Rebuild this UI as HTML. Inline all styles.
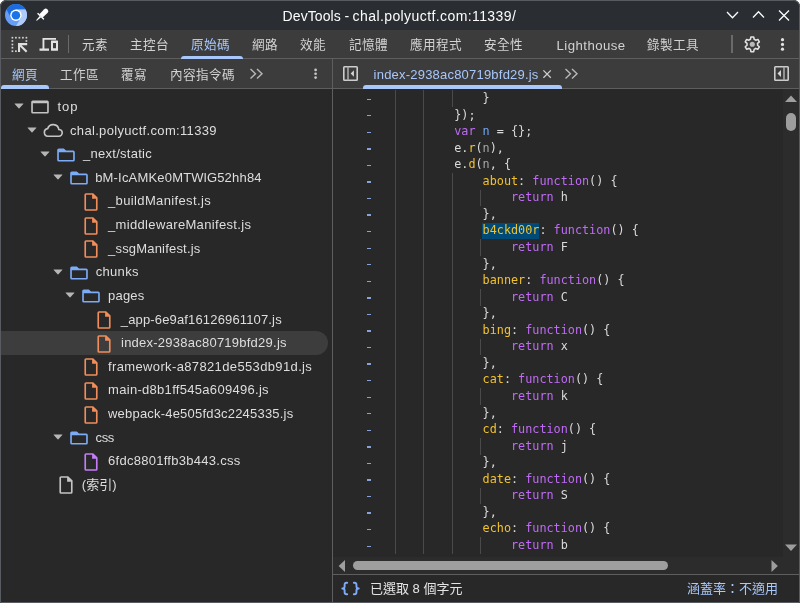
<!DOCTYPE html>
<html lang="zh-Hant">
<head>
<meta charset="utf-8">
<title>DevTools - chal.polyuctf.com:11339/</title>
<style>
*{box-sizing:border-box;margin:0;padding:0}
html,body{width:800px;height:603px;overflow:hidden;background:#fff}
body{font-family:"Liberation Sans","Noto Sans CJK TC",sans-serif;color:#e3e3e3;font-size:13px;position:relative}
.win{will-change:transform;position:absolute;left:0;top:0;width:800px;height:603px;background:#282828;border-radius:6.5px 6.5px 0 0;overflow:hidden}
.frame{position:absolute;left:0;top:0;width:800px;height:603px;border:1px solid #585c60;border-radius:6.5px 6.5px 0 0;z-index:50;pointer-events:none}
.abs{position:absolute}
.titlebar{position:absolute;left:0;top:0;width:800px;height:30px;background:#2a2e32}
.title{position:absolute;left:282.6px;width:400px;top:6.5px;height:18px;line-height:18px;text-align:left;font-size:14px;letter-spacing:0.32px;color:#fcfcfc;white-space:pre}
.toolbar{position:absolute;left:0;top:30px;width:800px;height:28px;background:#3c3c3c}
.hline{position:absolute;height:1px;background:#5e5e5e}
.vline{position:absolute;width:1px;background:#5e5e5e}
.tab{position:absolute;top:0;height:28px;line-height:31px;font-size:12.6px;letter-spacing:0.4px;color:#d2d2d2;white-space:nowrap}
.tab.sel{color:#a8c7fa}
.uline{position:absolute;z-index:5;height:3.5px;background:#a8c7fa;border-radius:3px 3px 0 0}
.row2{position:absolute;left:0;top:59px;width:800px;height:29px;background:#3c3c3c}
.tree{position:absolute;left:1px;top:89px;width:331px;height:513px;background:#282828}
.trow{position:absolute;left:0;width:331px;height:23.6px;line-height:23.6px;font-size:13px;white-space:pre;color:#dedede}
.trow span.t{position:absolute;top:1.3px}
.trow svg{position:absolute}
.code{position:absolute;left:333px;top:89px;width:450px;height:468px;background:#282828;overflow:hidden}
.ln{position:absolute;height:16.556px;line-height:16.556px;font-family:"DejaVu Sans Mono","Liberation Mono",monospace;font-size:11.8px;letter-spacing:-0.004px;white-space:pre;color:#dadada}
.k{color:#c06bf6}.p{color:#f2c22c}.v{color:#74a5f2}.n{color:#a6a6a6}
.dash{position:absolute;left:33.7px;width:4.6px;height:1.4px;background:#86a4d8}
.guide{position:absolute;width:1px;background:#4a4a4a}
.status{position:absolute;left:333px;top:575px;width:466px;height:27px;background:#282828;font-size:13px}
</style>
</head>
<body>
<div class="win">
  <!-- title bar -->
  <div class="titlebar">
    <svg class="abs" style="left:4px;top:3px" width="24" height="24" viewBox="0 0 24 24">
      <circle cx="12" cy="12" r="11" fill="#669df6"/>
      <path d="M2.47 6.5 A11 11 0 0 1 21.53 6.5 L12 6.6 L7.1 15 Z" fill="#1b6ce0"/>
      <path d="M21.53 6.5 A11 11 0 0 1 12 23 L16.76 14.9 L12 6.5Z" fill="#aecbfa"/>
      <circle cx="11.9" cy="12.25" r="5.7" fill="#fff"/>
      <circle cx="11.9" cy="12.25" r="4.3" fill="#1a73e8"/>
    </svg>
    <svg class="abs" style="left:35px;top:8.2px;overflow:visible" width="14" height="14" viewBox="0 0 14 14">
      <g transform="rotate(45 7 7)" fill="#fcfcfc">
        <path d="M4.7 8.4 L4.5 1.4 Q4.5 -0.8 7 -0.8 Q9.5 -0.8 9.5 1.4 L9.3 8.4 Z"/>
        <rect x="2.5" y="8.1" width="9" height="1.4" rx="0.5"/>
        <path d="M6.0 9.3 H8.0 L7.5 14.8 H6.5 Z"/>
      </g>
    </svg>
    <div class="title"><span style="letter-spacing:0.07px">DevTools</span><span style="letter-spacing:-0.2px"> - </span><span style="letter-spacing:0.41px">chal.polyuctf.com:11339/</span></div>
    <svg class="abs" style="left:724px;top:7px" width="70" height="16" viewBox="0 0 70 16" fill="none" stroke="#fcfcfc" stroke-width="1.3">
      <path d="M3 5 L8.5 10.7 L14 5"/>
      <path d="M29 10.5 L34.5 4.8 L40 10.5"/>
      <path d="M55 3.5 L65 13.5 M65 3.5 L55 13.5"/>
    </svg>
  </div>

  <!-- main toolbar -->
  <div class="toolbar">
    <svg class="abs" style="left:9.5px;top:6px" width="19" height="18" viewBox="0 0 19 18" fill="#dedede">
      <g opacity="0.92"><rect x="1.55" y="0.85" width="1.7" height="1.7"/><rect x="5.05" y="0.85" width="1.7" height="1.7"/><rect x="8.55" y="0.85" width="1.7" height="1.7"/><rect x="12.05" y="0.85" width="1.7" height="1.7"/><rect x="15.55" y="0.85" width="1.7" height="1.7"/><rect x="1.55" y="4.15" width="1.7" height="1.7"/><rect x="1.55" y="7.65" width="1.7" height="1.7"/><rect x="1.55" y="10.85" width="1.7" height="1.7"/><rect x="1.55" y="14.35" width="1.7" height="1.7"/><rect x="15.55" y="4.15" width="1.7" height="1.7"/><rect x="5.05" y="14.35" width="1.7" height="1.7"/></g>
      <path d="M8 7 H17.2 V9.2 H11.6 L17.4 15 L15.9 16.5 L10.1 10.7 V16 H8 Z"/>
    </svg>
    <svg class="abs" style="left:39px;top:6px" width="20" height="18" viewBox="0 0 20 18" fill="#e3e3e3">
      <path d="M3.5 2 H17 V3.8 H5.4 V12.5 H10 V14.8 H0.5 V12.5 H3.5 Z"/>
      <path d="M12.6 4.5 H18.4 Q19 4.5 19 5.1 V14.2 Q19 14.8 18.4 14.8 H12.6 Q12 14.8 12 14.2 V5.1 Q12 4.5 12.6 4.5 Z M14 7 V12.2 H17 V7 Z" fill-rule="evenodd"/>
    </svg>
    <div class="vline" style="left:68px;top:5px;height:18px;background:#6a6a6a"></div>
    <div class="tab" style="left:82px">元素</div>
    <div class="tab" style="left:130px">主控台</div>
    <div class="tab sel" style="left:191px">原始碼</div>
    <div class="tab" style="left:252px">網路</div>
    <div class="tab" style="left:300px">效能</div>
    <div class="tab" style="left:349px">記憶體</div>
    <div class="tab" style="left:410px">應用程式</div>
    <div class="tab" style="left:484px">安全性</div>
    <div class="tab" style="left:556.6px;font-size:13.2px;letter-spacing:0.44px">Lighthouse</div>
    <div class="tab" style="left:647px">錄製工具</div>
    <div class="uline" style="left:180.5px;top:25.5px;width:62px"></div>
    <div class="vline" style="left:731.4px;top:5px;height:18px;width:1.3px;background:#6a6a6a"></div>
    <svg class="abs" style="left:743.2px;top:5.2px" width="18.6" height="18.6" viewBox="0 0 24 24" fill="none" stroke="#e3e3e3" stroke-width="2">
      <path d="M10.2 2.5h3.6l.6 3 2 1.2 2.9-1 1.8 3.1-2.3 2v2.4l2.3 2-1.8 3.1-2.9-1-2 1.2-.6 3h-3.6l-.6-3-2-1.2-2.9 1-1.8-3.1 2.3-2v-2.4l-2.3-2 1.8-3.1 2.9 1 2-1.2z" stroke-linejoin="round"/>
      <circle cx="12" cy="12" r="3.3" fill="#b9b9b9" stroke="none"/>
    </svg>
    <svg class="abs" style="left:779px;top:7px" width="8" height="16" viewBox="0 0 8 16" fill="#e3e3e3">
      <circle cx="3.5" cy="2.7" r="1.6"/><circle cx="3.5" cy="7.45" r="1.6"/><circle cx="3.5" cy="12.2" r="1.6"/>
    </svg>
  </div>
  <div class="hline" style="left:0;top:58px;width:800px"></div>

  <!-- second row -->
  <div class="row2">
    <div class="tab sel" style="left:12px;line-height:32px">網頁</div>
    <div class="tab" style="left:60px;line-height:32px">工作區</div>
    <div class="tab" style="left:121px;line-height:32px">覆寫</div>
    <div class="tab" style="left:170px;line-height:32px">內容指令碼</div>
    <svg class="abs" style="left:249px;top:9px" width="15" height="12" viewBox="0 0 15 12" fill="none" stroke="#b8b8b8" stroke-width="1.4">
      <path d="M1.5 1 L6.5 5.8 L1.5 10.6"/><path d="M8 1 L13 5.8 L8 10.6"/>
    </svg>
    <svg class="abs" style="left:312.3px;top:7px" width="8" height="16" viewBox="0 0 8 16" fill="#c8c8c8">
      <circle cx="3.6" cy="3.9" r="1.35"/><circle cx="3.6" cy="7.75" r="1.35"/><circle cx="3.6" cy="11.6" r="1.35"/>
    </svg>
    <div class="uline" style="left:1px;top:26px;width:48px;height:3.7px"></div>
    <div class="vline" style="left:332px;top:0;height:29px"></div>
    <svg class="abs" style="left:342px;top:6px" width="17" height="17" viewBox="0 0 17 17" fill="none" stroke="#cdcdcd" stroke-width="1.6">
      <rect x="1.8" y="1.8" width="13.4" height="13.4" rx="0.7"/>
      <path d="M6 1.8 V15.2" stroke="#a8a8a8"/>
      <path d="M11.9 5.2 L8.7 8.5 L11.9 11.8Z" fill="#d6d6d6" stroke="none"/>
    </svg>
    <div class="tab sel" style="left:373.6px;line-height:32px;font-size:13px;letter-spacing:0.21px">index-2938ac80719bfd29.js</div>
    <svg class="abs" style="left:542px;top:10px" width="10" height="10" viewBox="0 0 10 10" fill="none" stroke="#d0d0d0" stroke-width="1.25">
      <path d="M1.4 1.4 L8.8 8.8 M8.8 1.4 L1.4 8.8"/>
    </svg>
    <div class="uline" style="left:362.5px;top:26px;width:199px;height:3.7px"></div>
    <svg class="abs" style="left:564px;top:9px" width="15" height="12" viewBox="0 0 15 12" fill="none" stroke="#b8b8b8" stroke-width="1.4">
      <path d="M1.5 1 L6.5 5.8 L1.5 10.6"/><path d="M8 1 L13 5.8 L8 10.6"/>
    </svg>
    <svg class="abs" style="left:773px;top:6px" width="17" height="17" viewBox="0 0 17 17" fill="none" stroke="#cdcdcd" stroke-width="1.6">
      <rect x="1.8" y="1.8" width="13.4" height="13.4" rx="0.7"/>
      <path d="M11 1.8 V15.2" stroke="#a8a8a8"/>
      <path d="M8 5 L4.5 8.5 L8 12Z" fill="#d6d6d6" stroke="none"/>
    </svg>
  </div>
  <div class="hline" style="left:0;top:88px;width:800px"></div>

  <!-- TREE -->
  <div class="tree">
    <div class="trow" style="top:5.750px"><span class="abs" style="left:13.20px;top:8.6px;line-height:0"><svg width="10" height="6" viewBox="0 0 10 6"><path d="M0.9 0.4 H9.1 Q9.7 0.4 9.3 0.9 L5.4 5.3 Q5 5.7 4.6 5.3 L0.7 0.9 Q0.3 0.4 0.9 0.4 Z" fill="#b6b6b6"/></svg></span><span class="abs" style="left:28.20px;top:1.70px;line-height:0"><svg width="22" height="22" viewBox="0 0 20 20" fill="#c4c4c4"><path fill-rule="evenodd" d="M3.4 4 H16.6 Q18 4 18 5.4 V14.6 Q18 16 16.6 16 H3.4 Q2 16 2 14.6 V5.4 Q2 4 3.4 4 Z M3.5 6.7 V14.5 H16.5 V6.7 Z"/></svg></span><span class="t" style="left:56.56px;top:0.35px;letter-spacing:0.870px">top</span></div>
    <div class="trow" style="top:29.375px"><span class="abs" style="left:26.00px;top:8.6px;line-height:0"><svg width="10" height="6" viewBox="0 0 10 6"><path d="M0.9 0.4 H9.1 Q9.7 0.4 9.3 0.9 L5.4 5.3 Q5 5.7 4.6 5.3 L0.7 0.9 Q0.3 0.4 0.9 0.4 Z" fill="#b6b6b6"/></svg></span><span class="abs" style="left:41.00px;top:1.70px;line-height:0"><svg width="22" height="22" viewBox="0 0 20 20" fill="none" stroke="#c4c4c4" stroke-width="1.5"><path d="M5.3 14.75 A3.5 3.5 0 0 1 5.2 7.8 A5.2 5.2 0 0 1 15.3 8.6 A3.07 3.07 0 0 1 15.3 14.75 Z"/></svg></span><span class="t" style="left:69.00px;top:0.72px;letter-spacing:0.330px">chal.polyuctf.com:11339</span></div>
    <div class="trow" style="top:53.000px"><span class="abs" style="left:38.80px;top:8.6px;line-height:0"><svg width="10" height="6" viewBox="0 0 10 6"><path d="M0.9 0.4 H9.1 Q9.7 0.4 9.3 0.9 L5.4 5.3 Q5 5.7 4.6 5.3 L0.7 0.9 Q0.3 0.4 0.9 0.4 Z" fill="#b6b6b6"/></svg></span><span class="abs" style="left:53.80px;top:1.70px;line-height:0"><svg width="22" height="22" viewBox="0 0 20 20" fill="#7cacf8"><path fill-rule="evenodd" d="M3.5 16 Q2 16 2 14.5 V5.5 Q2 4 3.5 4 H8 L10 6 H16.5 Q18 6 18 7.5 V14.5 Q18 16 16.5 16 Z M3.5 7.4 V14.5 H16.5 V7.4 Z"/></svg></span><span class="t" style="left:82.06px;top:0.10px;letter-spacing:0.266px">_next/static</span></div>
    <div class="trow" style="top:76.625px"><span class="abs" style="left:51.60px;top:8.6px;line-height:0"><svg width="10" height="6" viewBox="0 0 10 6"><path d="M0.9 0.4 H9.1 Q9.7 0.4 9.3 0.9 L5.4 5.3 Q5 5.7 4.6 5.3 L0.7 0.9 Q0.3 0.4 0.9 0.4 Z" fill="#b6b6b6"/></svg></span><span class="abs" style="left:66.60px;top:1.70px;line-height:0"><svg width="22" height="22" viewBox="0 0 20 20" fill="#7cacf8"><path fill-rule="evenodd" d="M3.5 16 Q2 16 2 14.5 V5.5 Q2 4 3.5 4 H8 L10 6 H16.5 Q18 6 18 7.5 V14.5 Q18 16 16.5 16 Z M3.5 7.4 V14.5 H16.5 V7.4 Z"/></svg></span><span class="t" style="left:94.16px;top:0.47px;letter-spacing:0.191px">bM-IcAMKe0MTWlG52hh84</span></div>
    <div class="trow" style="top:100.250px"><span class="abs" style="left:79.40px;top:1.70px;line-height:0"><svg width="22" height="22" viewBox="0 0 20 20" fill="#f08d5a"><path fill-rule="evenodd" d="M5.5 18 Q4 18 4 16.5 V3.5 Q4 2 5.5 2 H12 L16 6 V16.5 Q16 18 14.5 18 Z M5.5 3.5 V16.5 H14.5 V7 H11 V3.5 Z"/></svg></span><span class="t" style="left:107.02px;top:-0.15px;letter-spacing:0.365px">_buildManifest.js</span></div>
    <div class="trow" style="top:123.875px"><span class="abs" style="left:79.40px;top:1.70px;line-height:0"><svg width="22" height="22" viewBox="0 0 20 20" fill="#f08d5a"><path fill-rule="evenodd" d="M5.5 18 Q4 18 4 16.5 V3.5 Q4 2 5.5 2 H12 L16 6 V16.5 Q16 18 14.5 18 Z M5.5 3.5 V16.5 H14.5 V7 H11 V3.5 Z"/></svg></span><span class="t" style="left:107.02px;top:0.22px;letter-spacing:0.339px">_middlewareManifest.js</span></div>
    <div class="trow" style="top:147.500px"><span class="abs" style="left:79.40px;top:1.70px;line-height:0"><svg width="22" height="22" viewBox="0 0 20 20" fill="#f08d5a"><path fill-rule="evenodd" d="M5.5 18 Q4 18 4 16.5 V3.5 Q4 2 5.5 2 H12 L16 6 V16.5 Q16 18 14.5 18 Z M5.5 3.5 V16.5 H14.5 V7 H11 V3.5 Z"/></svg></span><span class="t" style="left:107.02px;top:0.60px;letter-spacing:0.190px">_ssgManifest.js</span></div>
    <div class="trow" style="top:171.125px"><span class="abs" style="left:51.60px;top:8.6px;line-height:0"><svg width="10" height="6" viewBox="0 0 10 6"><path d="M0.9 0.4 H9.1 Q9.7 0.4 9.3 0.9 L5.4 5.3 Q5 5.7 4.6 5.3 L0.7 0.9 Q0.3 0.4 0.9 0.4 Z" fill="#b6b6b6"/></svg></span><span class="abs" style="left:66.60px;top:1.70px;line-height:0"><svg width="22" height="22" viewBox="0 0 20 20" fill="#7cacf8"><path fill-rule="evenodd" d="M3.5 16 Q2 16 2 14.5 V5.5 Q2 4 3.5 4 H8 L10 6 H16.5 Q18 6 18 7.5 V14.5 Q18 16 16.5 16 Z M3.5 7.4 V14.5 H16.5 V7.4 Z"/></svg></span><span class="t" style="left:94.78px;top:-0.02px;letter-spacing:0.294px">chunks</span></div>
    <div class="trow" style="top:194.750px"><span class="abs" style="left:64.40px;top:8.6px;line-height:0"><svg width="10" height="6" viewBox="0 0 10 6"><path d="M0.9 0.4 H9.1 Q9.7 0.4 9.3 0.9 L5.4 5.3 Q5 5.7 4.6 5.3 L0.7 0.9 Q0.3 0.4 0.9 0.4 Z" fill="#b6b6b6"/></svg></span><span class="abs" style="left:79.40px;top:1.70px;line-height:0"><svg width="22" height="22" viewBox="0 0 20 20" fill="#7cacf8"><path fill-rule="evenodd" d="M3.5 16 Q2 16 2 14.5 V5.5 Q2 4 3.5 4 H8 L10 6 H16.5 Q18 6 18 7.5 V14.5 Q18 16 16.5 16 Z M3.5 7.4 V14.5 H16.5 V7.4 Z"/></svg></span><span class="t" style="left:107.04px;top:0.35px;letter-spacing:0.195px">pages</span></div>
    <div class="trow" style="top:218.375px"><span class="abs" style="left:92.20px;top:1.70px;line-height:0"><svg width="22" height="22" viewBox="0 0 20 20" fill="#f08d5a"><path fill-rule="evenodd" d="M5.5 18 Q4 18 4 16.5 V3.5 Q4 2 5.5 2 H12 L16 6 V16.5 Q16 18 14.5 18 Z M5.5 3.5 V16.5 H14.5 V7 H11 V3.5 Z"/></svg></span><span class="t" style="left:119.82px;top:0.73px;letter-spacing:0.151px">_app-6e9af16126961107.js</span></div>
    <div class="trow" style="top:242.000px"><div class="abs" style="left:0;top:-0.4px;width:327px;height:24.3px;background:#3d3d3d;border-radius:0 12.2px 12.2px 0"></div><span class="abs" style="left:92.20px;top:1.70px;line-height:0"><svg width="22" height="22" viewBox="0 0 20 20" fill="#f08d5a"><path fill-rule="evenodd" d="M5.5 18 Q4 18 4 16.5 V3.5 Q4 2 5.5 2 H12 L16 6 V16.5 Q16 18 14.5 18 Z M5.5 3.5 V16.5 H14.5 V7 H11 V3.5 Z"/></svg></span><span class="t" style="left:120.02px;top:0.10px;letter-spacing:0.240px">index-2938ac80719bfd29.js</span></div>
    <div class="trow" style="top:265.625px"><span class="abs" style="left:79.40px;top:1.70px;line-height:0"><svg width="22" height="22" viewBox="0 0 20 20" fill="#f08d5a"><path fill-rule="evenodd" d="M5.5 18 Q4 18 4 16.5 V3.5 Q4 2 5.5 2 H12 L16 6 V16.5 Q16 18 14.5 18 Z M5.5 3.5 V16.5 H14.5 V7 H11 V3.5 Z"/></svg></span><span class="t" style="left:107.04px;top:0.48px;letter-spacing:0.362px">framework-a87821de553db91d.js</span></div>
    <div class="trow" style="top:289.250px"><span class="abs" style="left:79.40px;top:1.70px;line-height:0"><svg width="22" height="22" viewBox="0 0 20 20" fill="#f08d5a"><path fill-rule="evenodd" d="M5.5 18 Q4 18 4 16.5 V3.5 Q4 2 5.5 2 H12 L16 6 V16.5 Q16 18 14.5 18 Z M5.5 3.5 V16.5 H14.5 V7 H11 V3.5 Z"/></svg></span><span class="t" style="left:107.04px;top:-0.15px;letter-spacing:0.299px">main-d8b1ff545a609496.js</span></div>
    <div class="trow" style="top:312.875px"><span class="abs" style="left:79.40px;top:1.70px;line-height:0"><svg width="22" height="22" viewBox="0 0 20 20" fill="#f08d5a"><path fill-rule="evenodd" d="M5.5 18 Q4 18 4 16.5 V3.5 Q4 2 5.5 2 H12 L16 6 V16.5 Q16 18 14.5 18 Z M5.5 3.5 V16.5 H14.5 V7 H11 V3.5 Z"/></svg></span><span class="t" style="left:107.04px;top:0.23px;letter-spacing:0.198px">webpack-4e505fd3c2245335.js</span></div>
    <div class="trow" style="top:336.500px"><span class="abs" style="left:51.60px;top:8.6px;line-height:0"><svg width="10" height="6" viewBox="0 0 10 6"><path d="M0.9 0.4 H9.1 Q9.7 0.4 9.3 0.9 L5.4 5.3 Q5 5.7 4.6 5.3 L0.7 0.9 Q0.3 0.4 0.9 0.4 Z" fill="#b6b6b6"/></svg></span><span class="abs" style="left:66.60px;top:1.70px;line-height:0"><svg width="22" height="22" viewBox="0 0 20 20" fill="#7cacf8"><path fill-rule="evenodd" d="M3.5 16 Q2 16 2 14.5 V5.5 Q2 4 3.5 4 H8 L10 6 H16.5 Q18 6 18 7.5 V14.5 Q18 16 16.5 16 Z M3.5 7.4 V14.5 H16.5 V7.4 Z"/></svg></span><span class="t" style="left:94.60px;top:0.60px;letter-spacing:-0.390px">css</span></div>
    <div class="trow" style="top:360.125px"><span class="abs" style="left:79.40px;top:1.70px;line-height:0"><svg width="22" height="22" viewBox="0 0 20 20" fill="#c47cf7"><path fill-rule="evenodd" d="M5.5 18 Q4 18 4 16.5 V3.5 Q4 2 5.5 2 H12 L16 6 V16.5 Q16 18 14.5 18 Z M5.5 3.5 V16.5 H14.5 V7 H11 V3.5 Z"/></svg></span><span class="t" style="left:107.04px;top:-0.02px;letter-spacing:0.273px">6fdc8801ffb3b443.css</span></div>
    <div class="trow" style="top:383.750px"><span class="abs" style="left:53.80px;top:1.70px;line-height:0"><svg width="22" height="22" viewBox="0 0 20 20" fill="#c4c4c4"><path fill-rule="evenodd" d="M5.5 18 Q4 18 4 16.5 V3.5 Q4 2 5.5 2 H12 L16 6 V16.5 Q16 18 14.5 18 Z M5.5 3.5 V16.5 H14.5 V7 H11 V3.5 Z"/></svg></span><span class="t" style="left:80.72px;top:0.35px;letter-spacing:0.090px">(索引)</span></div>
  </div>
  <div class="vline" style="left:332px;top:89px;height:513px"></div>

  <!-- CODE -->
  <div class="code">
    <div class="abs" style="left:149.00px;top:134.15px;width:57.40px;height:15.4px;background:#004a77"></div>
    <div class="dash" style="top:9.50px"></div>
    <div class="guide" style="left:61.90px;top:1.20px;height:16.86px"></div>
    <div class="guide" style="left:90.30px;top:1.20px;height:16.86px"></div>
    <div class="guide" style="left:118.70px;top:1.20px;height:16.86px"></div>
    <div class="ln" style="top:1.10px;left:149.60px">}</div>
    <div class="dash" style="top:26.06px"></div>
    <div class="guide" style="left:61.90px;top:17.76px;height:16.86px"></div>
    <div class="guide" style="left:90.30px;top:17.76px;height:16.86px"></div>
    <div class="ln" style="top:18.10px;left:121.20px">});</div>
    <div class="dash" style="top:42.61px"></div>
    <div class="guide" style="left:61.90px;top:34.31px;height:16.86px"></div>
    <div class="guide" style="left:90.30px;top:34.31px;height:16.86px"></div>
    <div class="ln" style="top:34.10px;left:121.20px"><span class="k">var</span> <span class="v">n</span> = {};</div>
    <div class="dash" style="top:59.17px"></div>
    <div class="guide" style="left:61.90px;top:50.87px;height:16.86px"></div>
    <div class="guide" style="left:90.30px;top:50.87px;height:16.86px"></div>
    <div class="ln" style="top:51.10px;left:121.20px">e.<span class="p">r</span>(<span class="n">n</span>),</div>
    <div class="dash" style="top:75.72px"></div>
    <div class="guide" style="left:61.90px;top:67.42px;height:16.86px"></div>
    <div class="guide" style="left:90.30px;top:67.42px;height:16.86px"></div>
    <div class="ln" style="top:67.10px;left:121.20px">e.<span class="p">d</span>(<span class="n">n</span>, {</div>
    <div class="dash" style="top:92.28px"></div>
    <div class="guide" style="left:61.90px;top:83.98px;height:16.86px"></div>
    <div class="guide" style="left:90.30px;top:83.98px;height:16.86px"></div>
    <div class="guide" style="left:118.70px;top:83.98px;height:16.86px"></div>
    <div class="ln" style="top:84.10px;left:149.60px"><span class="p">about</span>: <span class="k">function</span>() {</div>
    <div class="dash" style="top:108.84px"></div>
    <div class="guide" style="left:61.90px;top:100.54px;height:16.86px"></div>
    <div class="guide" style="left:90.30px;top:100.54px;height:16.86px"></div>
    <div class="guide" style="left:118.70px;top:100.54px;height:16.86px"></div>
    <div class="guide" style="left:147.10px;top:100.54px;height:16.86px"></div>
    <div class="ln" style="top:100.10px;left:178.00px"><span class="k">return</span> h</div>
    <div class="dash" style="top:125.39px"></div>
    <div class="guide" style="left:61.90px;top:117.09px;height:16.86px"></div>
    <div class="guide" style="left:90.30px;top:117.09px;height:16.86px"></div>
    <div class="guide" style="left:118.70px;top:117.09px;height:16.86px"></div>
    <div class="ln" style="top:117.10px;left:149.60px">},</div>
    <div class="dash" style="top:141.95px"></div>
    <div class="guide" style="left:61.90px;top:133.65px;height:16.86px"></div>
    <div class="guide" style="left:90.30px;top:133.65px;height:16.86px"></div>
    <div class="guide" style="left:118.70px;top:133.65px;height:16.86px"></div>
    <div class="ln" style="top:133.10px;left:149.60px"><span class="p">b4ckd00r</span>: <span class="k">function</span>() {</div>
    <div class="dash" style="top:158.50px"></div>
    <div class="guide" style="left:61.90px;top:150.20px;height:16.86px"></div>
    <div class="guide" style="left:90.30px;top:150.20px;height:16.86px"></div>
    <div class="guide" style="left:118.70px;top:150.20px;height:16.86px"></div>
    <div class="guide" style="left:147.10px;top:150.20px;height:16.86px"></div>
    <div class="ln" style="top:150.10px;left:178.00px"><span class="k">return</span> F</div>
    <div class="dash" style="top:175.06px"></div>
    <div class="guide" style="left:61.90px;top:166.76px;height:16.86px"></div>
    <div class="guide" style="left:90.30px;top:166.76px;height:16.86px"></div>
    <div class="guide" style="left:118.70px;top:166.76px;height:16.86px"></div>
    <div class="ln" style="top:167.10px;left:149.60px">},</div>
    <div class="dash" style="top:191.62px"></div>
    <div class="guide" style="left:61.90px;top:183.32px;height:16.86px"></div>
    <div class="guide" style="left:90.30px;top:183.32px;height:16.86px"></div>
    <div class="guide" style="left:118.70px;top:183.32px;height:16.86px"></div>
    <div class="ln" style="top:183.10px;left:149.60px"><span class="p">banner</span>: <span class="k">function</span>() {</div>
    <div class="dash" style="top:208.17px"></div>
    <div class="guide" style="left:61.90px;top:199.87px;height:16.86px"></div>
    <div class="guide" style="left:90.30px;top:199.87px;height:16.86px"></div>
    <div class="guide" style="left:118.70px;top:199.87px;height:16.86px"></div>
    <div class="guide" style="left:147.10px;top:199.87px;height:16.86px"></div>
    <div class="ln" style="top:200.10px;left:178.00px"><span class="k">return</span> C</div>
    <div class="dash" style="top:224.73px"></div>
    <div class="guide" style="left:61.90px;top:216.43px;height:16.86px"></div>
    <div class="guide" style="left:90.30px;top:216.43px;height:16.86px"></div>
    <div class="guide" style="left:118.70px;top:216.43px;height:16.86px"></div>
    <div class="ln" style="top:216.10px;left:149.60px">},</div>
    <div class="dash" style="top:241.28px"></div>
    <div class="guide" style="left:61.90px;top:232.98px;height:16.86px"></div>
    <div class="guide" style="left:90.30px;top:232.98px;height:16.86px"></div>
    <div class="guide" style="left:118.70px;top:232.98px;height:16.86px"></div>
    <div class="ln" style="top:233.10px;left:149.60px"><span class="p">bing</span>: <span class="k">function</span>() {</div>
    <div class="dash" style="top:257.84px"></div>
    <div class="guide" style="left:61.90px;top:249.54px;height:16.86px"></div>
    <div class="guide" style="left:90.30px;top:249.54px;height:16.86px"></div>
    <div class="guide" style="left:118.70px;top:249.54px;height:16.86px"></div>
    <div class="guide" style="left:147.10px;top:249.54px;height:16.86px"></div>
    <div class="ln" style="top:249.10px;left:178.00px"><span class="k">return</span> x</div>
    <div class="dash" style="top:274.40px"></div>
    <div class="guide" style="left:61.90px;top:266.10px;height:16.86px"></div>
    <div class="guide" style="left:90.30px;top:266.10px;height:16.86px"></div>
    <div class="guide" style="left:118.70px;top:266.10px;height:16.86px"></div>
    <div class="ln" style="top:266.10px;left:149.60px">},</div>
    <div class="dash" style="top:290.95px"></div>
    <div class="guide" style="left:61.90px;top:282.65px;height:16.86px"></div>
    <div class="guide" style="left:90.30px;top:282.65px;height:16.86px"></div>
    <div class="guide" style="left:118.70px;top:282.65px;height:16.86px"></div>
    <div class="ln" style="top:282.10px;left:149.60px"><span class="p">cat</span>: <span class="k">function</span>() {</div>
    <div class="dash" style="top:307.51px"></div>
    <div class="guide" style="left:61.90px;top:299.21px;height:16.86px"></div>
    <div class="guide" style="left:90.30px;top:299.21px;height:16.86px"></div>
    <div class="guide" style="left:118.70px;top:299.21px;height:16.86px"></div>
    <div class="guide" style="left:147.10px;top:299.21px;height:16.86px"></div>
    <div class="ln" style="top:299.10px;left:178.00px"><span class="k">return</span> k</div>
    <div class="dash" style="top:324.06px"></div>
    <div class="guide" style="left:61.90px;top:315.76px;height:16.86px"></div>
    <div class="guide" style="left:90.30px;top:315.76px;height:16.86px"></div>
    <div class="guide" style="left:118.70px;top:315.76px;height:16.86px"></div>
    <div class="ln" style="top:316.10px;left:149.60px">},</div>
    <div class="dash" style="top:340.62px"></div>
    <div class="guide" style="left:61.90px;top:332.32px;height:16.86px"></div>
    <div class="guide" style="left:90.30px;top:332.32px;height:16.86px"></div>
    <div class="guide" style="left:118.70px;top:332.32px;height:16.86px"></div>
    <div class="ln" style="top:332.10px;left:149.60px"><span class="p">cd</span>: <span class="k">function</span>() {</div>
    <div class="dash" style="top:357.18px"></div>
    <div class="guide" style="left:61.90px;top:348.88px;height:16.86px"></div>
    <div class="guide" style="left:90.30px;top:348.88px;height:16.86px"></div>
    <div class="guide" style="left:118.70px;top:348.88px;height:16.86px"></div>
    <div class="guide" style="left:147.10px;top:348.88px;height:16.86px"></div>
    <div class="ln" style="top:349.10px;left:178.00px"><span class="k">return</span> j</div>
    <div class="dash" style="top:373.73px"></div>
    <div class="guide" style="left:61.90px;top:365.43px;height:16.86px"></div>
    <div class="guide" style="left:90.30px;top:365.43px;height:16.86px"></div>
    <div class="guide" style="left:118.70px;top:365.43px;height:16.86px"></div>
    <div class="ln" style="top:365.10px;left:149.60px">},</div>
    <div class="dash" style="top:390.29px"></div>
    <div class="guide" style="left:61.90px;top:381.99px;height:16.86px"></div>
    <div class="guide" style="left:90.30px;top:381.99px;height:16.86px"></div>
    <div class="guide" style="left:118.70px;top:381.99px;height:16.86px"></div>
    <div class="ln" style="top:382.10px;left:149.60px"><span class="p">date</span>: <span class="k">function</span>() {</div>
    <div class="dash" style="top:406.84px"></div>
    <div class="guide" style="left:61.90px;top:398.54px;height:16.86px"></div>
    <div class="guide" style="left:90.30px;top:398.54px;height:16.86px"></div>
    <div class="guide" style="left:118.70px;top:398.54px;height:16.86px"></div>
    <div class="guide" style="left:147.10px;top:398.54px;height:16.86px"></div>
    <div class="ln" style="top:398.10px;left:178.00px"><span class="k">return</span> S</div>
    <div class="dash" style="top:423.40px"></div>
    <div class="guide" style="left:61.90px;top:415.10px;height:16.86px"></div>
    <div class="guide" style="left:90.30px;top:415.10px;height:16.86px"></div>
    <div class="guide" style="left:118.70px;top:415.10px;height:16.86px"></div>
    <div class="ln" style="top:415.10px;left:149.60px">},</div>
    <div class="dash" style="top:439.96px"></div>
    <div class="guide" style="left:61.90px;top:431.66px;height:16.86px"></div>
    <div class="guide" style="left:90.30px;top:431.66px;height:16.86px"></div>
    <div class="guide" style="left:118.70px;top:431.66px;height:16.86px"></div>
    <div class="ln" style="top:431.10px;left:149.60px"><span class="p">echo</span>: <span class="k">function</span>() {</div>
    <div class="dash" style="top:456.51px"></div>
    <div class="guide" style="left:61.90px;top:448.21px;height:16.86px"></div>
    <div class="guide" style="left:90.30px;top:448.21px;height:16.86px"></div>
    <div class="guide" style="left:118.70px;top:448.21px;height:16.86px"></div>
    <div class="guide" style="left:147.10px;top:448.21px;height:16.86px"></div>
    <div class="ln" style="top:448.10px;left:178.00px"><span class="k">return</span> b</div>
  </div>

  <!-- scrollbars -->
  <div class="abs" style="left:783px;top:89px;width:16px;height:468px;background:#2c2c2c">
    <svg class="abs" style="left:2px;top:6px" width="12" height="8" viewBox="0 0 12 8"><path d="M0 7 L6 0.6 L12 7Z" fill="#9e9e9e"/></svg>
    <div class="abs" style="left:3px;top:24px;width:10px;height:18px;border-radius:5px;background:#9e9e9e"></div>
    <svg class="abs" style="left:2px;top:455px" width="12" height="8" viewBox="0 0 12 8"><path d="M0 0.5 L6 6.9 L12 0.5Z" fill="#9e9e9e"/></svg>
  </div>
  <div class="abs" style="left:333px;top:557px;width:466px;height:17px;background:#2c2c2c">
    <svg class="abs" style="left:5px;top:3px" width="8" height="12" viewBox="0 0 8 12"><path d="M7 0 L0.6 6 L7 12Z" fill="#9e9e9e"/></svg>
    <div class="abs" style="left:20px;top:4px;width:315px;height:9px;border-radius:4.5px;background:#9e9e9e"></div>
    <svg class="abs" style="left:438px;top:3px" width="8" height="12" viewBox="0 0 8 12"><path d="M0.5 0 L6.9 6 L0.5 12Z" fill="#9e9e9e"/></svg>
  </div>
  <div class="hline" style="left:333px;top:574px;width:467px"></div>

  <!-- status -->
  <div class="status">
    <svg class="abs" style="left:7px;top:5px" width="21" height="17" viewBox="0 0 21 17" fill="none" stroke="#7cacf8" stroke-width="1.9" stroke-linecap="round" stroke-linejoin="round">
      <path transform="translate(-0.4,0)" d="M7.6 2.7 H7 Q5 2.7 5 4.7 V6.6 Q5 8.5 2.7 8.5 Q5 8.5 5 10.4 V12.3 Q5 14.3 7 14.3 H7.6"/>
      <path transform="translate(0.45,0)" d="M13.4 2.7 H14 Q16 2.7 16 4.7 V6.6 Q16 8.5 18.3 8.5 Q16 8.5 16 10.4 V12.3 Q16 14.3 14 14.3 H13.4"/>
    </svg>
    <div class="abs" style="left:37px;top:0;line-height:28px;white-space:pre">已選取 8 個字元</div>
    <div class="abs" style="left:354px;top:0;line-height:28px;color:#a8c7fa;white-space:pre">涵蓋率：不適用</div>
  </div>
</div>
<div class="frame"></div>


</body>
</html>
